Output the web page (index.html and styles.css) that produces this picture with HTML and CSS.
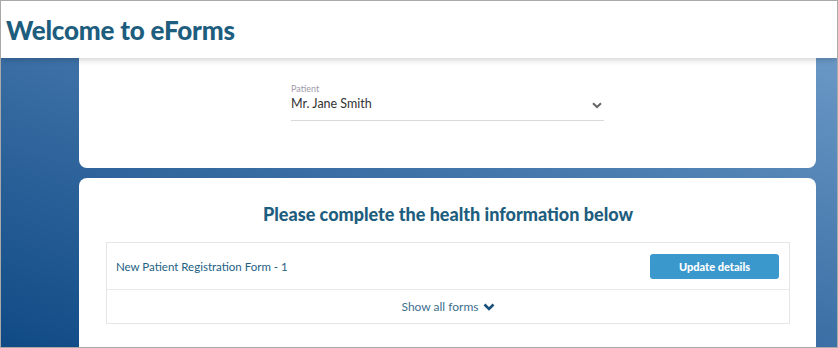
FILE: index.html
```html
<!DOCTYPE html>
<html lang="en">
<head>
    <meta charset="UTF-8">
    <meta name="viewport" content="width=device-width, initial-scale=1.0">
    <title>eForms</title>
    <link rel="stylesheet" href="styles.css">
</head>
<body>
    <div class="frame">
        <header class="top-bar">
            <h1>Welcome to eForms</h1>
        </header>

        <main class="page">
            <section class="card patient-card">
                <div class="select-field">
                    <span class="field-label">Patient</span>
                    <div class="field-value">
                        <span>Mr. Jane Smith</span>
                        <svg class="chevron" width="10" height="7" viewBox="0 0 10 7">
                            <path d="M1 1.2 L5 5 L9 1.2" fill="none" stroke="#666" stroke-width="2"/>
                        </svg>
                    </div>
                </div>
            </section>

            <section class="card forms-card">
                <h2>Please complete the health information below</h2>
                <div class="forms-table">
                    <div class="form-row">
                        <span class="form-name">New Patient Registration Form - 1</span>
                        <button type="button" class="update-btn">Update details</button>
                    </div>
                    <div class="show-all">
                        Show all forms
                        <svg width="12" height="8" viewBox="0 0 12 8">
                            <path d="M1.5 1.5 L6 6 L10.5 1.5" fill="none" stroke="#174f78" stroke-width="2.6"/>
                        </svg>
                    </div>
                </div>
            </section>
        </main>
    </div>
</body>
</html>
```

FILE: styles.css
```css
body {
    margin: 0;
    font-family: Lato, 'Open Sans', sans-serif;
}

.frame {
    height: 348px;
    box-sizing: border-box;
    border: 1px solid #a9a9a9;
    overflow: hidden;
    display: flex;
    flex-direction: column;
}

.top-bar {
    position: relative;
    z-index: 1;
    height: 57px;
    flex-shrink: 0;
    background-color: white;
    box-shadow: 0 2px 6px rgba(0, 0, 0, 0.18);
    display: flex;
    align-items: center;
    padding-left: 5px;
}

.top-bar h1 {
    margin: 0;
    font-size: 26px;
    font-weight: 900;
    color: #1d5d7e;
    letter-spacing: -0.2px;
}

.page {
    flex: 1;
    background: linear-gradient(to top right, #0f4984 0%, #3a6ea4 50%, #6a98c6 100%);
    padding: 0 21px 0 78px;
}

.card {
    background-color: white;
    border-radius: 8px;
}

.patient-card {
    border-top-left-radius: 0;
    border-top-right-radius: 0;
    height: 110px;
    box-sizing: border-box;
    padding-top: 25px;
    display: flex;
    justify-content: center;
}

.select-field {
    width: 313px;
    border-bottom: 1px solid #d9d9d9;
    height: 37px;
}

.field-label {
    display: block;
    font-size: 9px;
    color: #a39bab;
    line-height: 11px;
}

.field-value {
    display: flex;
    justify-content: space-between;
    align-items: center;
    font-size: 12.5px;
    color: #333;
    margin-top: 2px;
}

.chevron {
    margin-right: 2px;
    margin-top: 3px;
}

.forms-card {
    margin-top: 10px;
    padding: 25px 26px 30px 27px;
}

.forms-card h2 {
    margin: 0 0 17px;
    text-align: center;
    font-size: 18px;
    font-weight: 900;
    color: #1d5d7e;
}

.forms-table {
    border: 1px solid #e6e6e6;
}

.form-row {
    display: flex;
    justify-content: space-between;
    align-items: center;
    height: 46px;
    padding: 0 10px 0 9px;
    border-bottom: 1px solid #e9e9e9;
}

.form-name {
    font-size: 11.5px;
    color: #245f84;
}

.update-btn {
    width: 129px;
    height: 25px;
    background-color: #3b98cc;
    color: white;
    border: none;
    border-radius: 3px;
    font-family: Lato, sans-serif;
    font-size: 11px;
    font-weight: 900;
}

.show-all {
    height: 33px;
    display: flex;
    justify-content: center;
    align-items: center;
    gap: 4px;
    font-size: 12px;
    color: #3e6f8f;
}
```
